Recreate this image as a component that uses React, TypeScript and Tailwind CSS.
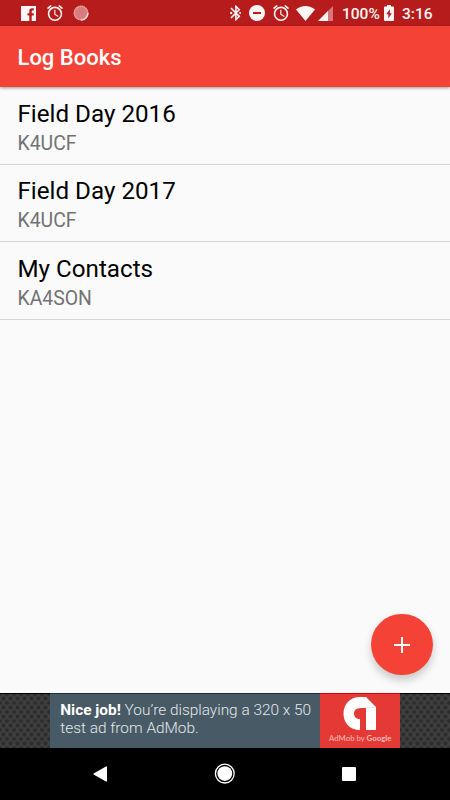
import React from "react";

const books = [
  { name: "Field Day 2016", call: "K4UCF" },
  { name: "Field Day 2017", call: "K4UCF" },
  { name: "My Contacts", call: "KA4SON" },
];

function Alarm({ className }: { className: string }) {
  return (
    <svg className={className} viewBox="2 2 20 20" fill="currentColor">
      <path d="M22 5.72l-4.6-3.86-1.29 1.53 4.6 3.86L22 5.72zM7.88 3.39L6.6 1.86 2 5.71l1.29 1.53 4.59-3.85zM12.5 8H11v6l4.75 2.85.75-1.23-4-2.37V8zM12 4c-4.97 0-9 4.03-9 9s4.02 9 9 9c4.97 0 9-4.03 9-9s-4.03-9-9-9zm0 16c-3.87 0-7-3.13-7-7s3.13-7 7-7 7 3.13 7 7-3.13 7-7 7z" />
    </svg>
  );
}

function StatusBar() {
  return (
    <header className="flex h-[26px] shrink-0 items-center bg-[#b71c1c] text-[#fff5f5]">
      <svg className="ml-[21px] h-[15px] w-[15px]" viewBox="0 0 15 15">
        <path fill="currentColor" d="M0 0H15V15H10.7V9.5H12.8V7.3H10.7V5.7C10.7 4.8 11 4.4 11.8 4.4H12.8V2.3H11.1C9.1 2.3 8.3 3.5 8.3 5.3V7.3H6.5V9.5H8.3V15H0Z" />
      </svg>
      <Alarm className="ml-[11px] h-4 w-4" />
      <svg className="ml-[10px] h-4 w-4" viewBox="0 0 16 16">
        <circle cx="8" cy="8" r="7.5" fill="#d97c7c" />
        <circle cx="8" cy="8" r="6.6" fill="none" stroke="#e6adad" strokeWidth="1.4" strokeDasharray="1 1" />
        <path d="M15 8A7 7 0 0 1 8 15" fill="none" stroke="#f8dede" strokeWidth="1.3" />
      </svg>
      <svg className="ml-[141px] h-4 w-[11px]" viewBox="4.5 2 14 20" fill="currentColor">
        <path d="M17.71 7.71L12 2h-1v7.59L6.41 5 5 6.41 10.59 12 5 17.59 6.41 19 11 14.41V22h1l5.71-5.71-4.3-4.29 4.3-4.29zM13 5.83l1.88 1.88L13 9.59V5.83zm1.88 10.46L13 18.17v-3.76l1.88 1.88z" />
        <circle cx="6" cy="12" r="1.5" />
        <circle cx="17.3" cy="12" r="1.2" />
      </svg>
      <svg className="ml-2 h-4 w-4" viewBox="0 0 16 16">
        <path fill="currentColor" fillRule="evenodd" d="M8 0A8 8 0 1 1 8 16A8 8 0 1 1 8 0ZM4 7V9H12V7Z" />
      </svg>
      <Alarm className="ml-2 h-4 w-4" />
      <svg className="ml-[7px] h-[15px] w-[19px]" viewBox="0 0 19 15">
        <path fill="currentColor" d="M0 3.6C5.4-1.2 13.6-1.2 19 3.6L9.5 15Z" />
      </svg>
      <svg className="ml-[3px] h-[15px] w-[15px]" viewBox="0 0 15 15">
        <path fill="#d77777" d="M15 0V15H0Z" />
        <path fill="currentColor" d="M10 5V15H0Z" />
      </svg>
      <span className="ml-[9px] w-[38px] whitespace-nowrap pt-[2px] text-[15.5px] font-medium leading-[26px]">100%</span>
      <svg className="ml-1 h-4 w-[10px]" viewBox="0 0 10 16">
        <path fill="currentColor" fillRule="evenodd" d="M3 0H7V1.6H9Q10 1.6 10 2.6V15Q10 16 9 16H1Q0 16 0 15V2.6Q0 1.6 1 1.6H3ZM5.8 4.3L2.3 9.3H4.4V13.6L7.8 8.3H5.8Z" />
      </svg>
      <span className="ml-2 whitespace-nowrap pt-[2px] text-[15.5px] font-medium leading-[26px]">3:16</span>
    </header>
  );
}

function AdTexture() {
  return (
    <div className="h-full flex-1 border-t border-black bg-[#404040] bg-[radial-gradient(circle,#2c2c2c_1.4px,transparent_2.6px),radial-gradient(circle,#2c2c2c_1.4px,transparent_2.6px)] bg-[length:7px_9px] bg-[position:0_0,3.5px_4.5px]" />
  );
}

function AdBanner() {
  return (
    <div className="flex h-[55px] shrink-0">
      <AdTexture />
      <div className="h-full w-[270.5px] border-t border-[#123341] bg-[#485a65] pl-[10.5px] pt-[7px] text-[15.4px] font-light leading-[18px] text-[#e4e9ec]">
        <p className="whitespace-nowrap"><b className="font-bold text-white">Nice job!</b> You’re displaying a 320 x 50</p>
        <p className="whitespace-nowrap">test ad from AdMob.</p>
      </div>
      <div className="flex h-full w-20 flex-col items-center border-t border-[#d90000] bg-[#e53935]">
        <svg className="mt-[3px] h-[33px] w-[34px] shrink-0" viewBox="0 0 34 33">
          <path fill="#fff" d="M16.5 0H23L33 10V33H23V11H18C12.8 11 11 13.8 11 16.5C11 20 13.5 22 17 22V33C6.5 33 .5 25.5 .5 16.5C.5 7 7.5 0 16.5 0Z" />
          <path fill="#e3e3e3" d="M22.5 10.2H33V11L23 11.5Z" />
        </svg>
        <p className="mt-[3px] whitespace-nowrap font-['Lato',sans-serif] text-[7.8px] leading-[11px] text-[#f8bcba]">AdMob by <span className="font-bold">Google</span></p>
      </div>
      <AdTexture />
    </div>
  );
}

function NavigationBar() {
  return (
    <nav className="flex h-[52px] shrink-0 items-center bg-black text-white">
      <svg className="ml-[93px] h-4 w-[14px]" viewBox="0 0 14 16"><path fill="currentColor" d="M13 .5Q14 0 14 1V15Q14 16 13 15.4L.6 8.5Q0 8 .6 7.5Z" /></svg>
      <svg className="ml-[107px] h-[22px] w-[22px]" viewBox="0 0 22 22"><circle cx="10.8" cy="10.6" r="9.4" fill="none" stroke="currentColor" strokeWidth="1.3" /><circle cx="10.8" cy="10.6" r="7.4" fill="currentColor" /></svg>
      <div className="ml-[106px] h-[14px] w-[14px] rounded-[1px] bg-white" />
    </nav>
  );
}

export default function App() {
  return (
    <div className="relative flex h-[800px] w-[450px] flex-col overflow-hidden bg-[#fafafa] font-['Roboto',sans-serif]">
      <StatusBar />
      <div className="z-10 flex h-[61px] shrink-0 items-center bg-[#f44336] pl-[17.5px] pt-[2px] text-[22px] font-medium text-white shadow-[0_1px_3px_rgba(0,0,0,0.4)]">
        <h1>Log Books</h1>
      </div>
      <main className="flex-1">
        {books.map((book) => (
          <section key={book.name} className="h-[77.6px] border-b border-[#d5d5d5] pl-[17.5px] pt-[11.9px]">
            <h2 className="text-[24.2px] leading-[30px] text-black">{book.name}</h2>
            <p className="pt-px text-[19.4px] leading-7 text-[#737373]">{book.call}</p>
          </section>
        ))}
      </main>
      <button aria-label="Add log book" className="absolute left-[371px] top-[614px] flex h-[61px] w-[61.5px] items-center justify-center rounded-full bg-[#f44336] shadow-[0_5px_9px_rgba(0,0,0,0.2)]">
        <svg className="h-4 w-4" viewBox="0 0 16 16"><path d="M8 0V16M0 8H16" stroke="white" strokeWidth="2" /></svg>
      </button>
      <AdBanner />
      <NavigationBar />
    </div>
  );
}
